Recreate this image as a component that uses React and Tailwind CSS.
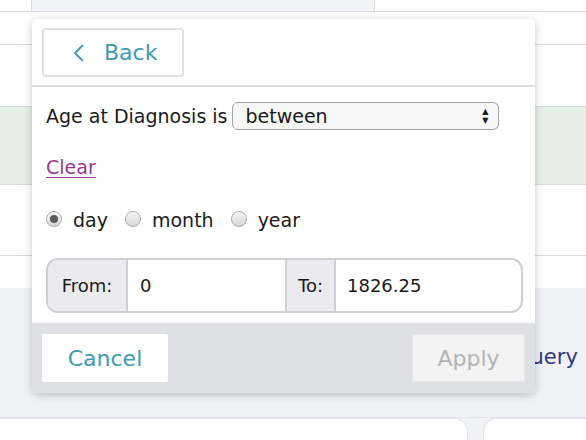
import React from 'react';

const font = "font-['DejaVu_Sans','Liberation_Sans',sans-serif]";

function Radio({ checked, label }) {
  return (
    <label className="flex items-center gap-[11px]">
      <span className="w-[16px] h-[16px] rounded-full border border-[#a9a9a9] bg-gradient-to-b from-[#f4f4f4] to-[#d8d8d8] flex items-center justify-center shadow-[inset_0_1px_1px_rgba(255,255,255,0.8)]">
        {checked && <span className="w-[8px] h-[8px] rounded-full bg-[#5c5c5c]" />}
      </span>
      <span className="text-[19px] text-[#1a1a1a] leading-none pt-[3px]">{label}</span>
    </label>
  );
}

export default function App() {
  return (
    <div className={`relative w-[586px] h-[440px] overflow-hidden bg-white ${font}`}>
      {/* table behind the popup */}
      <div className="h-[12px] flex border-b border-[#d9dae0]">
        <div className="ml-[31px] w-[344px] bg-[#f2f3f7] border-x border-[#d9dae0]" />
      </div>
      <div className="h-[33px] border-b border-[#d9dae0]" />
      <div className="h-[62px] border-b border-[#d9dae0]" />
      <div className="h-[78px] bg-[#e6f0e8] border-b border-[#d9dae0]" />
      <div className="h-[71px] border-b border-[#d9dae0]" />
      <div className="h-[32px]" />
      <div className="h-[130px] bg-[#f1f2f6] flex items-center pl-[514px] pt-[10px] border-b border-[#e4e5ea]">
        <span className="text-[21px] text-[#2c3a8c] whitespace-nowrap">Query</span>
      </div>
      <div className="flex gap-[15px] bg-[#f1f2f6] h-[22px]">
        <div className="w-[468px] bg-white rounded-tr-[14px] border-t border-r border-[#e2e3e8]" />
        <div className="flex-1 bg-white rounded-tl-[14px] border-t border-l border-[#e2e3e8]" />
      </div>

      {/* popup */}
      <div className="absolute left-[32px] top-[19px] w-[503px] bg-white rounded-[5px] overflow-hidden shadow-[0_2px_10px_rgba(0,0,0,0.22)]">
        <div className="px-[10px] pt-[9px] pb-[8px] border-b-2 border-[#dcdde1]">
          <button className="w-[142px] h-[49px] border-2 border-[#dfe0e4] rounded-[3px] flex items-center pl-[29px] gap-[19px] text-[#3f9ab6]">
            <svg width="12" height="20" viewBox="0 0 12 20">
              <polyline points="10,2 2,10 10,18" fill="none" stroke="currentColor" strokeWidth="1.8" />
            </svg>
            <span className="text-[22px] leading-none">Back</span>
          </button>
        </div>

        <div className="pl-[14px] pr-[12px] pt-[14px] pb-[10px]">
          <div className="flex items-center h-[30px]">
            <span className="text-[19px] text-[#1a1a1a]">Age at Diagnosis is</span>
            <div className="ml-[4px] w-[267px] h-[28px] rounded-[6px] border-[1.5px] border-[#a3a3a3] bg-[#f7f7f7] flex items-center justify-between pl-[13px] pr-[9px]">
              <span className="text-[19px] text-[#1a1a1a]">between</span>
              <span className="flex flex-col items-center text-[#1a1a1a] text-[8px] leading-[9px]">
                <span>▲</span>
                <span>▼</span>
              </span>
            </div>
          </div>

          <div className="mt-[21px] h-[30px] flex items-center">
            <a href="#" className="text-[19px] text-[#963a93] underline underline-offset-[3px]">Clear</a>
          </div>

          <div className="mt-[22px] h-[30px] flex items-center gap-[17px]">
            <Radio checked label="day" />
            <Radio label="month" />
            <Radio label="year" />
          </div>

          <div className="mt-[24px] h-[55px] flex rounded-[12px] border-2 border-[#cfcfd3] overflow-hidden">
            <div className="w-[80px] bg-[#ebebef] border-r-2 border-[#cfcfd3] flex items-center justify-center text-[18px] text-[#1a1a1a]">From:</div>
            <div className="w-[157px] flex items-center pl-[12px] text-[18px] text-[#1a1a1a]">0</div>
            <div className="w-[51px] bg-[#ebebef] border-x-2 border-[#cfcfd3] flex items-center justify-center text-[18px] text-[#1a1a1a]">To:</div>
            <div className="flex-1 flex items-center pl-[11px] text-[18px] text-[#1a1a1a]">1826.25</div>
          </div>
        </div>

        <div className="bg-[#dfe0e4] h-[70px] px-[10px] pt-[11px] flex justify-between items-start">
          <button className="w-[126px] h-[48px] bg-white rounded-[2px] text-[22px] text-[#3f9ab6]">Cancel</button>
          <button className="w-[113px] h-[48px] bg-[#f3f3f3] border border-[#e6e6e9] rounded-[2px] text-[22px] text-[#b3b3b3]">Apply</button>
        </div>
      </div>
    </div>
  );
}
